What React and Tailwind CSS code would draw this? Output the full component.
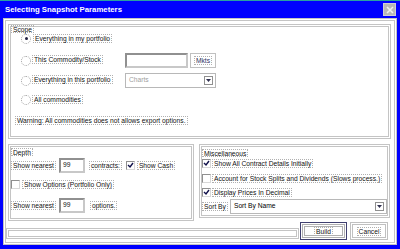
import React from "react";

const Label = ({ children, className = "" }) => (
  <span className={`border border-dotted border-[#b0b0b0] px-[1px] leading-[7px] whitespace-nowrap ${className}`}>
    {children}
  </span>
);

const Radio = ({ checked }) => (
  <span className="w-[10px] h-[10px] rounded-full border border-dotted border-[#a0a0a0] bg-white flex items-center justify-center shrink-0">
    {checked && <span className="w-[3px] h-[3px] rounded-full bg-[#202040]" />}
  </span>
);

const Check = ({ checked }) => (
  <span className="w-[9px] h-[9px] border border-[#909090] border-r-[#d8d8d8] border-b-[#d8d8d8] bg-white flex items-center justify-center shrink-0">
    {checked && (
      <svg width="7" height="7" viewBox="0 0 7 7">
        <path d="M1 3 L3 5 L6 1" stroke="#10104a" strokeWidth="1.4" fill="none" />
      </svg>
    )}
  </span>
);

const Input = ({ value, className = "" }) => (
  <div className={`h-[15px] border-2 border-[#c8c8c8] border-t-[#909090] border-l-[#909090] bg-white flex items-center pl-[2px] ${className}`}>
    {value}
  </div>
);

const Combo = ({ value, className = "", muted }) => (
  <div className={`h-[15px] border border-[#b8b8b8] bg-white flex items-center pl-[3px] pr-[2px] ${className}`}>
    <span className={muted ? "text-[#a0a0a0]" : "text-black"}>{value}</span>
    <span className="ml-auto w-[9px] h-[9px] border border-[#909090] flex items-center justify-center">
      <svg width="5" height="3" viewBox="0 0 5 3">
        <path d="M0 0 L5 0 L2.5 3 Z" fill="#303050" />
      </svg>
    </span>
  </div>
);

const Box = ({ className = "", children }) => (
  <div className={`border-[3px] border-double border-[#c4c4c4] flex flex-col ${className}`}>{children}</div>
);

export default function App() {
  return (
    <div className="w-[400px] h-[249px] bg-[#0000ff] flex flex-col overflow-hidden font-['Liberation_Sans',sans-serif] text-[6.7px] text-[#101010]">
      {/* Title bar */}
      <div className="h-[18px] flex items-center pl-[5px] pr-[4px] border-t border-[#2aa0a0]">
        <span className="text-white font-bold text-[7.8px]">Selecting Snapshot Parameters</span>
        <span className="ml-auto w-[13px] h-[13px] bg-[#b8b8b8] border border-[#d0d0d0] flex items-center justify-center">
          <svg width="8" height="8" viewBox="0 0 8 8">
            <path d="M1 1 L7 7 M7 1 L1 7" stroke="#f0f0f0" strokeWidth="1.6" />
          </svg>
        </span>
      </div>

      {/* Body */}
      <div className="mx-[3px] mb-[4px] flex-1 bg-white border-[3px] border-double border-[#c4c4c4] flex flex-col px-[2px] pt-[3px]">
        {/* Scope */}
        <Box className="h-[115px] w-[383px]">
          <div className="-mt-[2px] h-[8px] flex"><Label>Scope</Label></div>
          <div className="h-[11px] flex items-center pl-[10px] gap-[2px]">
            <Radio checked />
            <Label className="border-[#606060]">Everything in my portfolio</Label>
          </div>
          <div className="mt-[9px] h-[15px] flex items-center pl-[10px]">
            <Radio />
            <div className="w-[94px] pl-[1px]"><Label>This Commodity/Stock</Label></div>
            <Input value="" className="w-[63px]" />
            <span className="ml-[2px] w-[26px] h-[15px] border border-[#c0c0c0] flex items-center justify-center">
              <Label className="text-[#303060]">Mkts</Label>
            </span>
          </div>
          <div className="mt-[5px] h-[15px] flex items-center pl-[10px]">
            <Radio />
            <div className="w-[94px] pl-[1px]"><Label>Everything in this portfolio</Label></div>
            <Combo value="Charts" muted className="w-[91px]" />
          </div>
          <div className="mt-[6px] h-[11px] flex items-center pl-[10px] gap-[1px]">
            <Radio />
            <Label>All commodities</Label>
          </div>
          <div className="mt-[10px] h-[10px] flex items-center pl-[4px]">
            <Label>Warning: All commodities does not allows export options.</Label>
          </div>
        </Box>

        {/* Depth + Misc */}
        <div className="mt-[5px] flex gap-[5px] items-start">
          <Box className="w-[186px] h-[77px]">
            <div className="mt-[1px] h-[8px] flex"><Label>Depth</Label></div>
            <div className="mt-[2px] h-[14px] flex items-center">
              <Label>Show nearest</Label>
              <Input value="99" className="ml-[3px] w-[26px]" />
              <Label className="ml-[4px]">contracts:</Label>
              <span className="ml-[4px]"><Check checked /></span>
              <Label className="ml-[2px]">Show Cash</Label>
            </div>
            <div className="mt-[7px] h-[10px] flex items-center gap-[2px]">
              <Check />
              <Label>Show Options (Portfolio Only)</Label>
            </div>
            <div className="mt-[9px] h-[14px] flex items-center">
              <Label>Show nearest</Label>
              <Input value="99" className="ml-[3px] w-[26px]" />
              <Label className="ml-[5px]">options.</Label>
            </div>
          </Box>
          <Box className="w-[191px] h-[74px]">
            <div className="mt-[2px] h-[8px] flex"><Label>Miscellaneous</Label></div>
            <div className="mt-[1px] h-[10px] flex items-center gap-[1px]">
              <Check checked />
              <Label>Show All Contract Details Initially</Label>
            </div>
            <div className="mt-[5px] h-[10px] flex items-center gap-[1px]">
              <Check />
              <Label>Account for Stock Splits and Dividends (Slows process.)</Label>
            </div>
            <div className="mt-[4px] h-[10px] flex items-center gap-[1px]">
              <Check checked />
              <Label>Display Prices In Decimal</Label>
            </div>
            <div className="mt-[2px] h-[14px] flex items-center">
              <Label>Sort By</Label>
              <Combo value="Sort By Name" className="ml-[2px] w-[157px] h-[14px]" />
            </div>
          </Box>
        </div>

        {/* Bottom bar */}
        <div className="mt-[1px] flex items-end">
          <div className="-ml-[2px] w-[293px] h-[11px] border-[3px] border-double border-[#c4c4c4] mb-[1px]" />
          <span className="ml-[1px] w-[47px] h-[18px] border border-[#404070] flex items-center justify-center">
            <span className="w-[43px] h-[14px] border-[3px] border-double border-[#b0b0b0] flex items-center justify-center">
              <Label>Build</Label>
            </span>
          </span>
          <span className="ml-[3px] w-[38px] h-[18px] border-[3px] border-double border-[#c0c0c0] flex items-center justify-center">
            <Label>Cancel</Label>
          </span>
        </div>
      </div>
    </div>
  );
}
